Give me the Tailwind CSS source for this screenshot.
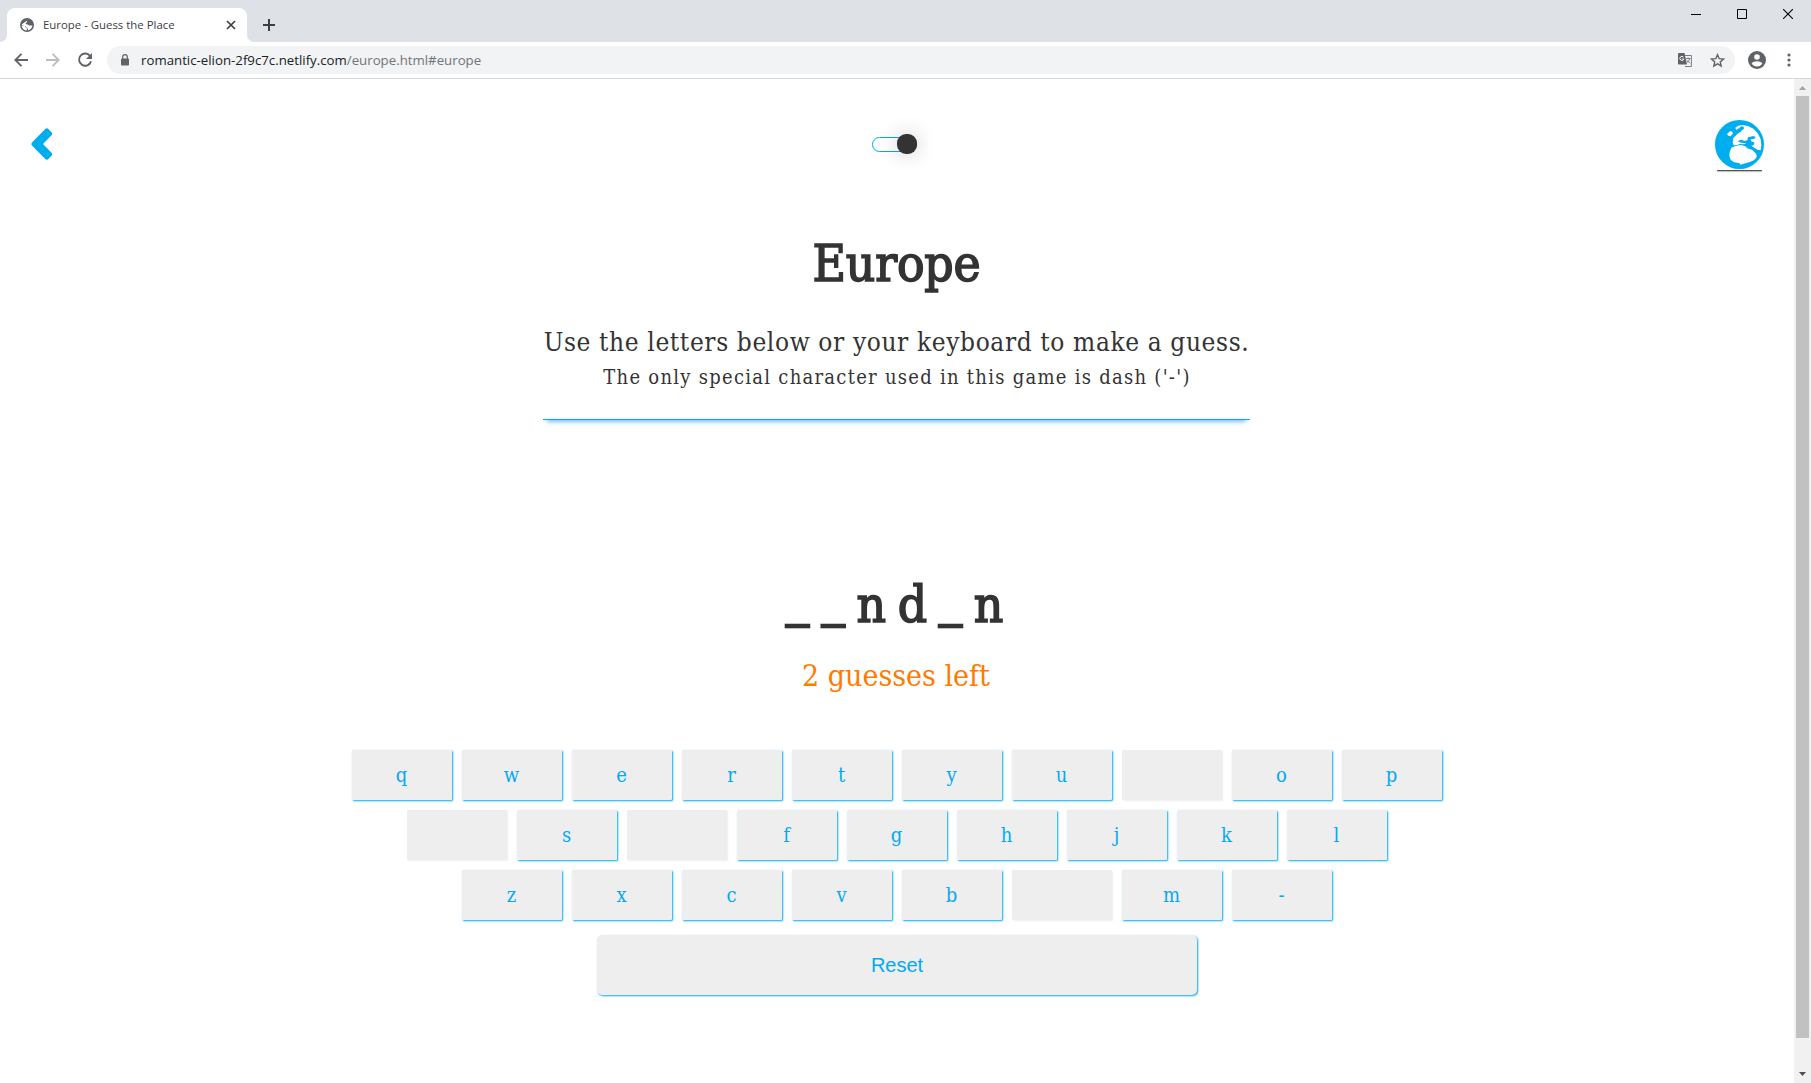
<!DOCTYPE html>
<html lang="en">
<head>
<meta charset="utf-8">
<title>Europe - Guess the Place</title>
<script src="https://cdn.jsdelivr.net/npm/@tailwindcss/browser@4"></script>
</head>
<body class="flex h-screen flex-col overflow-hidden bg-white text-[#333]">

<!-- Tab strip -->
<header class="flex h-[42px] shrink-0 items-start bg-[#dee1e6] font-['Open_Sans',sans-serif]">
  <div class="flex h-[34px] w-[254px] items-end self-end">
    <div class="h-2 w-[7px] bg-white"><div class="size-full rounded-br-lg bg-[#dee1e6]"></div></div>
    <div class="flex h-full w-60 items-center rounded-t-lg bg-white pr-[11px] pl-[13px]">
      <svg class="size-[14px] shrink-0" viewBox="0 0 14 14"><circle cx="7" cy="7" r="7" fill="#5f6368"/><path d="M8.500 1.600C6.800 2.200 6.400 3.300 7.200 4.300 5.800 4.300 5.400 5.300 6 6.300c1.300 0 2.300.3 2.900 1.200h3.500c-.2 2.400-2 4.600-4.600 4.900l.2-1.700C6.500 10.500 6.800 8.800 5.500 8.200L1.700 7.300C1.700 9.800 3.600 12.300 6.700 12.500l.2-2.200C5.500 9.500 5.500 8.400 4.700 7.900L1.600 6.600z" fill="#fff"/></svg>
      <span class="ml-[9px] flex-1 text-[11.400px] whitespace-nowrap text-[#3c4043]">Europe - Guess the Place</span>
      <svg class="size-[10px]" viewBox="0 0 10 10" stroke="#3c4043" stroke-width="1.700"><path d="M1 1l8 8M9 1l-8 8"/></svg>
    </div>
    <div class="h-2 w-[7px] bg-white"><div class="size-full rounded-bl-lg bg-[#dee1e6]"></div></div>
  </div>
  <svg class="mt-[19px] ml-[9px] size-3" viewBox="0 0 12 12" stroke="#3c4043" stroke-width="2"><path d="M6 0v12M0 6h12"/></svg>
  <div class="mt-[9px] mr-[18px] ml-auto flex gap-9">
    <svg class="size-[10px]" viewBox="0 0 10 10"><path d="M0 5h10v1H0z"/></svg>
    <svg class="size-[10px]" viewBox="0 0 10 10" fill="none" stroke="#000"><path d="M.5.5h9v9h-9z"/></svg>
    <svg class="size-[10px]" viewBox="0 0 10 10" stroke="#000" stroke-width="1.100"><path d="M0 0l10 10M10 0L0 10"/></svg>
  </div>
</header>

<!-- Toolbar -->
<nav class="flex h-[37px] shrink-0 items-center border-b border-[#d5d7da] pl-[14px] font-['Open_Sans',sans-serif]">
  <svg class="size-[14px]" viewBox="0 0 14 14" fill="none" stroke="#5f6368" stroke-width="1.900"><path d="M14 7H1.500M7.500.8L1.300 7l6.200 6.200"/></svg>
  <svg class="ml-[18px] size-[14px]" viewBox="0 0 14 14" fill="none" stroke="#bcbec1" stroke-width="1.900"><path d="M0 7h12.500M6.500.8L12.700 7l-6.200 6.200"/></svg>
  <svg class="ml-[17px] size-4" viewBox="0 0 16 16" fill="none" stroke="#5f6368" stroke-width="1.900"><path d="M13.300 4.300A6.100 6.100 0 1 0 14 9.400"/><path d="M15 1v6H9z" fill="#5f6368" stroke="none"/></svg>
  <div class="ml-[14px] flex h-7 w-[1628px] items-center rounded-full bg-[#f1f3f4] pr-[10px] pl-[14px]">
    <svg class="-mt-px h-[12px] w-[8px]" viewBox="0 0 8 12"><path d="M1.700 5V3a2.300 2.300 0 0 1 4.600 0v2" fill="none" stroke="#5f6368" stroke-width="1.200"/><rect y="4.500" width="8" height="7" rx=".8" fill="#5f6368"/></svg>
    <p class="ml-3 flex-1 pt-px text-[13.250px] text-[#202124]">romantic-elion-2f9c7c.netlify.com<span class="text-[#70757a]">/europe.html#europe</span></p>
    <svg class="size-[14px]" viewBox="0 0 14 14"><path d="M5 2.500h8.400v11H7" fill="none" stroke="#7a7e82"/><path d="M1 0h5.500L9 11.500H1a1 1 0 0 1-1-1V1a1 1 0 0 1 1-1z" fill="#5f6368"/><path d="M5.500 4.200a2 2 0 1 0 .3 1.800H4.200" fill="none" stroke="#fff"/><path d="M8 5.500h4.500M10.200 4.500v1M11.700 5.700c-.5 2-1.700 3-2.700 3.800M9 7.300l3 3" fill="none" stroke="#5f6368" stroke-width=".8"/></svg>
    <svg class="ml-[18px] size-[15px]" viewBox="0 0 15 15" fill="none" stroke="#5f6368" stroke-width="1.400"><path d="M7.500 1.700l1.700 4 4.300.4-3.300 2.800 1 4.200-3.700-2.200-3.700 2.200 1-4.200L1.500 6.100l4.300-.4z"/></svg>
  </div>
  <svg class="ml-[13px] size-[18px]" viewBox="0 0 18 18"><circle cx="9" cy="9" r="9" fill="#5f6368"/><circle cx="9" cy="6" r="2.800" fill="#fff"/><path d="M3.600 12.700C4.500 11 7 10.300 9 10.300s4.500.7 5.400 2.400A6.500 6.500 0 0 1 9 15.400a6.500 6.500 0 0 1-5.400-2.700z" fill="#fff"/></svg>
  <svg class="ml-[21px] h-[14px] w-[4px]" viewBox="0 0 4 14" fill="#5f6368"><circle cx="2" cy="2" r="1.600"/><circle cx="2" cy="7" r="1.600"/><circle cx="2" cy="12" r="1.600"/></svg>
</nav>

<div class="flex min-h-0 flex-1">
  <main class="flex flex-1 flex-col items-center bg-white font-['Roboto_Slab','DejaVu_Serif_Condensed',serif]">
    <!-- Back link, theme switch, region -->
    <div class="mt-[41px] flex h-[51px] w-full items-start justify-between pr-[30px] pl-[31px]">
      <div class="w-[43px]"><svg class="mt-2 h-8 w-[21px]" viewBox="0 0 21 32" fill="#00adef" stroke="#00adef" stroke-width="5" stroke-linejoin="round"><path d="M15.800 3L3 16l12.800 13L18.500 26.300 8.500 16 18.500 5.700z"/></svg></div>
      <div class="mt-[17px] flex h-[15px] w-[45px] items-center justify-end rounded-full border border-[#03a9f4]">
        <div class="-mr-px -mt-px size-5 shrink-0 rounded-[9px] bg-[#333] shadow-[0_0_20px_rgba(0,0,0,0.220)]"></div>
      </div>
      <div class="flex w-[49px] flex-col items-center">
        <svg class="size-[49px]" viewBox="10 12 147 147"><circle cx="83.500" cy="85.500" r="73.500" fill="#00adef"/>
          <path d="M63 79l2-13 13-13 8-5 4-4-9 1-7-3-3-7 8-6 14-2 16 3 16 8 13 14 9 18 2 19-2 14-10-2-14-9-9-8-10-1-12 2-6-2-9 4-11 1z" fill="#fff"/>
          <path d="M50 50l6-5 6 2 1 6-6 8-7-2-4-5z" fill="#fff"/>
          <path d="M74 40l9-3 5-6 8 1 1 6-8 6-8 6-4-6zM80 74l10-3 8 4 9-2 2-9 17-4 6 4-5 5-10 1 1 6 9 3 1 6-7 4-13-2-9-6-10-1-8-2z" fill="#00adef"/>
          <path d="M54 108l5-13 12-5 16-3 13 3 7 7 15 5 12 12 1 9-8 10-15 6-16 4-9 3-5-5-15-2-10-8-4-11z" fill="#fff"/></svg>
        <div class="mt-px h-px w-[45px] rounded bg-[#555] shadow-[0_1px_1px_rgba(0,0,0,0.300)]"></div>
      </div>
    </div>

    <h1 class="mt-[61px] mr-px h-[64px] text-[51px] leading-[64px] tracking-[-0.200px] [-webkit-text-stroke:1.600px_#333]">Europe</h1>
    <p class="mt-[29px] mr-px h-[35px] text-[26px] leading-[35px] tracking-[0.620px] whitespace-nowrap">Use the letters below or your keyboard to make a guess.</p>
    <p class="mt-[2px] h-[30px] text-[20px] leading-[30px] tracking-[1.270px] whitespace-nowrap">The only special character used in this game is dash ('-')</p>
    <div class="mr-[2px] h-[28px] w-[707px] border-b border-[#03a9f4] shadow-[0_6px_4px_-4px_rgba(3,130,240,0.500)]"></div>

    <p class="mt-[153px] h-[64px] pl-[7px] text-[51px] leading-[64px] tracking-[11.800px] whitespace-nowrap [-webkit-text-stroke:1.600px_#333]"><span class="inline-block -translate-y-[7px] [-webkit-text-stroke:2.600px_#333]">_</span><span class="inline-block -translate-y-[7px] pl-px [-webkit-text-stroke:2.600px_#333]">_</span>nd<span class="inline-block -translate-y-[7px] [-webkit-text-stroke:2.600px_#333]">_</span>n</p>
    <p class="mt-[19px] mr-[2px] h-[40px] text-[30px] leading-[40px] whitespace-nowrap text-[#ff7b00]">2 guesses left</p>

    <!-- Letter keys; the script fills each row -->
    <div id="keys" class="mt-[54px] flex flex-col gap-[10px]"></div>
    <button class="mt-[15px] h-[60px] w-[600px] rounded-[5px] bg-[#eee] pb-px font-['Liberation_Sans',Arial,sans-serif] text-[20px] text-[#03a9f4] shadow-[1px_1px_2px_#03a9f4]">Reset</button>
  </main>

  <!-- Scrollbar -->
  <aside class="flex w-[17px] flex-col items-center bg-[#f1f1f1]">
    <svg class="mt-[7px] h-1 w-[7px]" viewBox="0 0 7 4"><path d="M3.500 0L7 4H0z" fill="#a3a3a3"/></svg>
    <div class="mt-[6px] h-[942px] w-[13px] bg-[#c1c1c1]"></div>
    <svg class="mt-[34px] h-1 w-[7px]" viewBox="0 0 7 4"><path d="M0 0h7L3.500 4z" fill="#505050"/></svg>
  </aside>
</div>

<script>
const rows = ["qwertyu op", " s fghjkl", "zxcvb m-"];
document.getElementById("keys").innerHTML = rows.map(row =>
  '<div class="flex justify-center gap-[10px]">' + [...row].map(k => k === " "
    ? '<button class="h-[50px] w-[100px] rounded-[1px] bg-[#eee] shadow-[1px_1px_2px_#eee]"></button>'
    : '<button class="h-[50px] w-[100px] rounded-[1px] bg-[#eee] pr-px text-[20px] text-[#03a9f4] shadow-[1px_1px_2px_#03a9f4]">' + k + '</button>').join("") + '</div>').join("");
</script>
</body>
</html>
